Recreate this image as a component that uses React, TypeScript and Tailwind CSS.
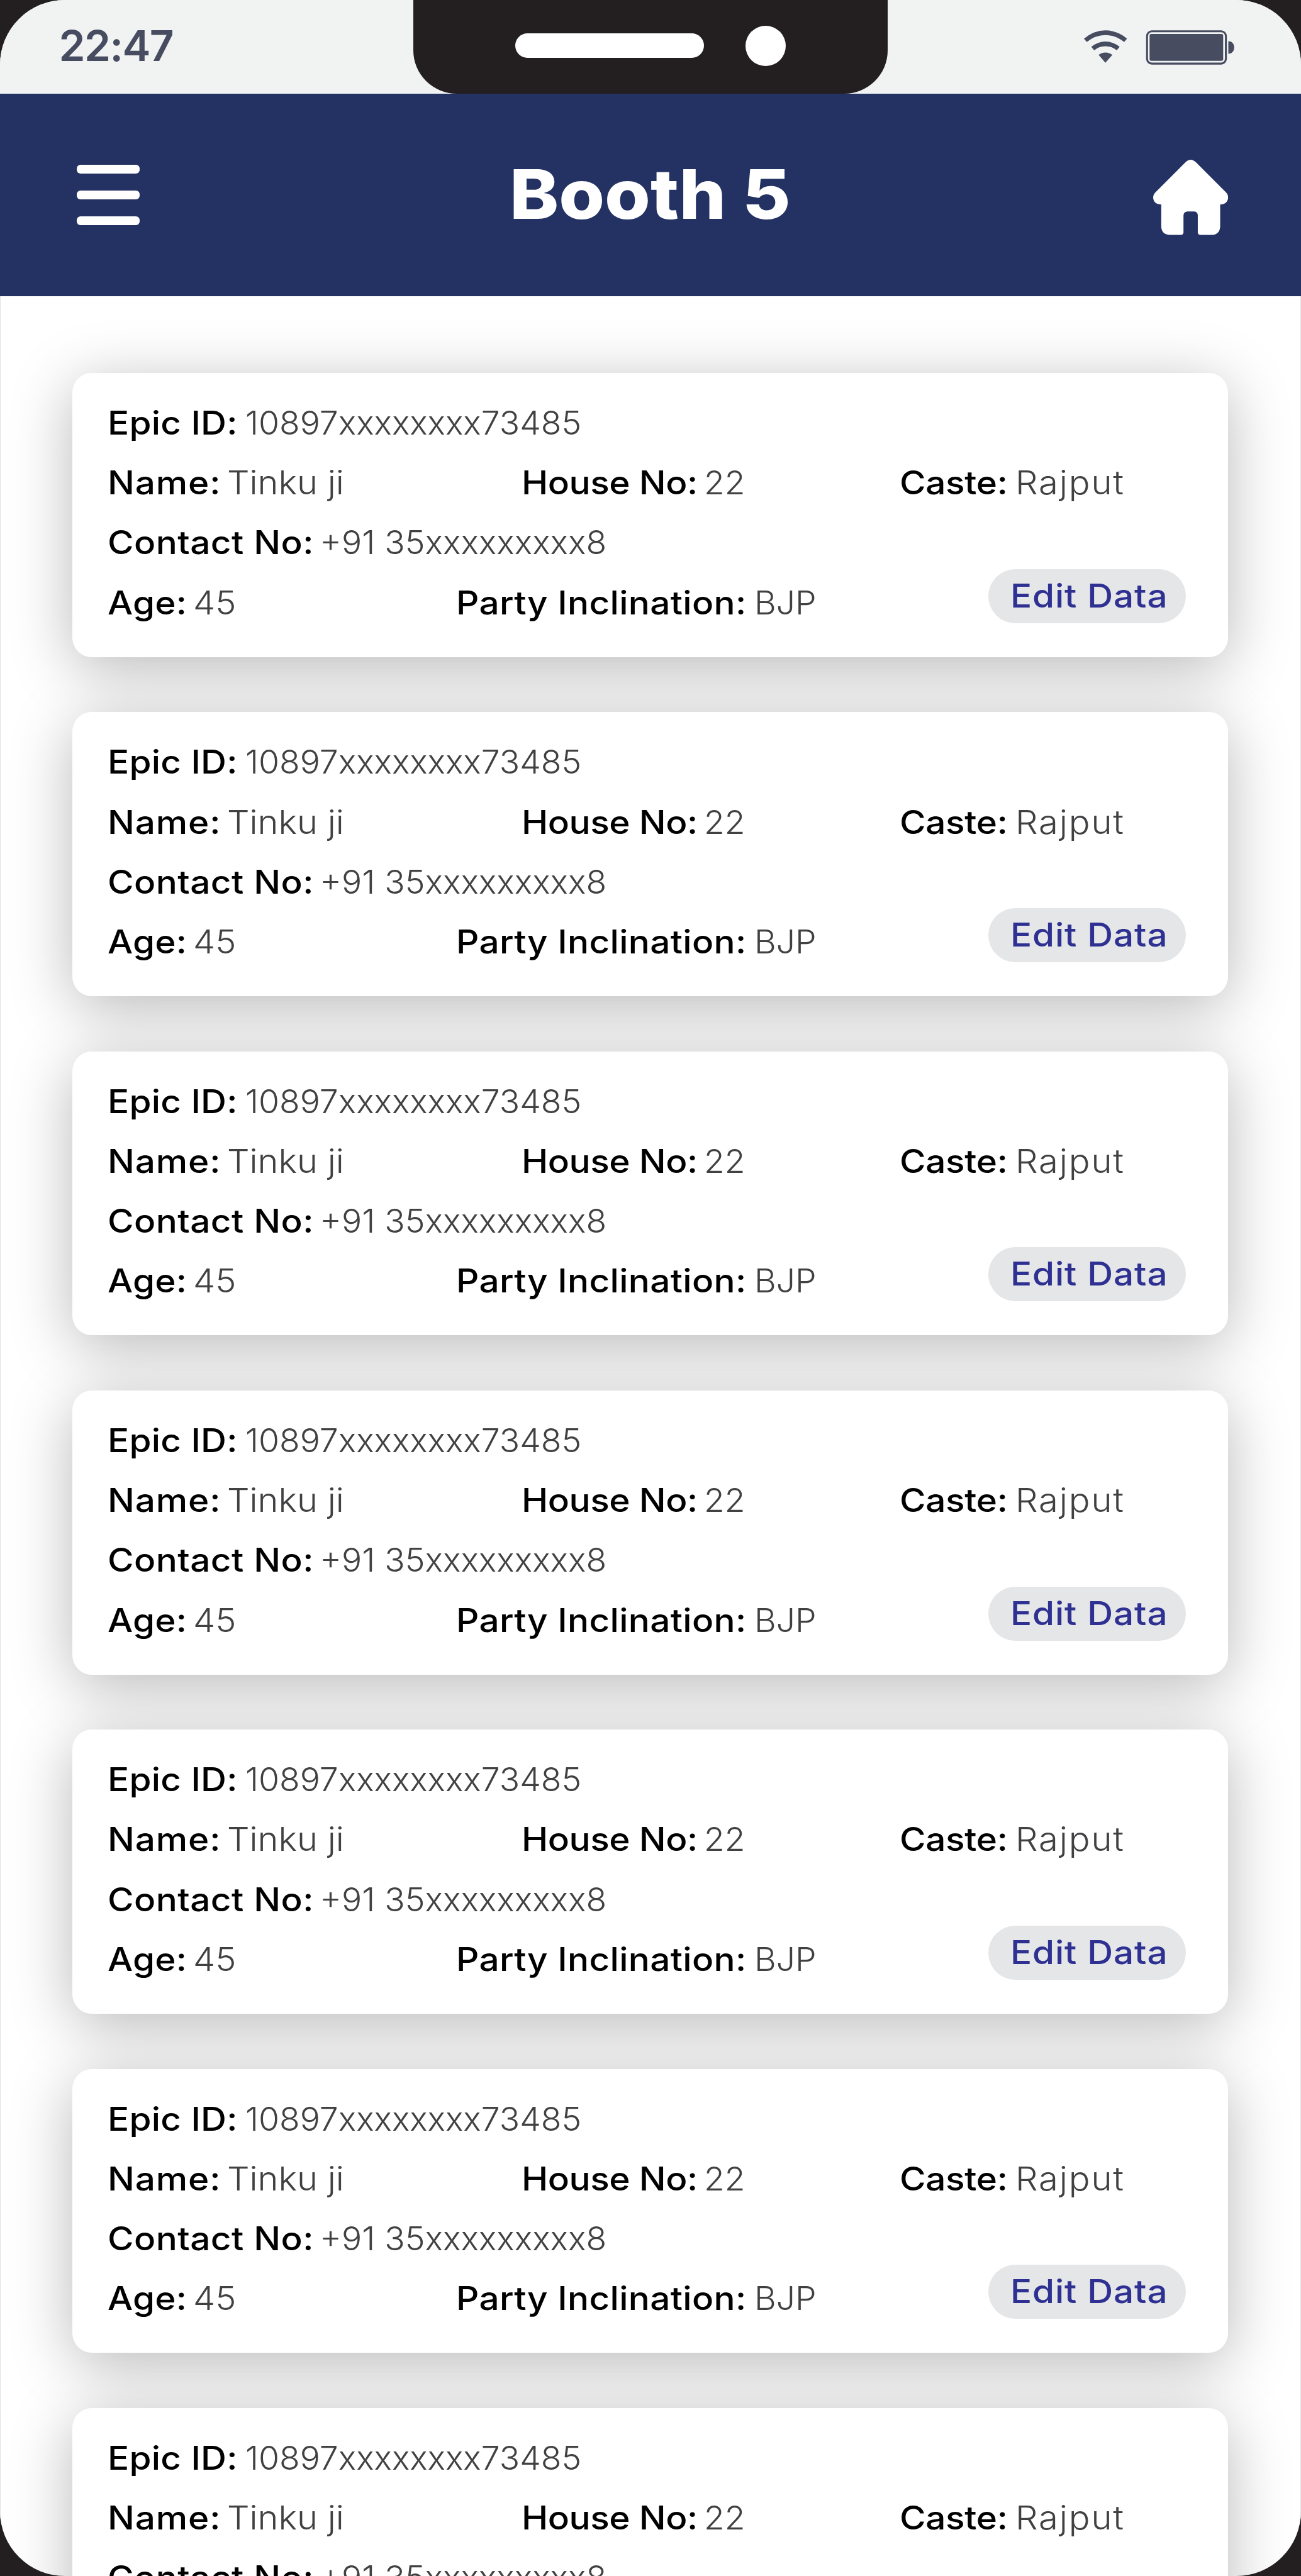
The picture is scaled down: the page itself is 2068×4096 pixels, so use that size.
import React from "react";

type CardData = {
  epicId: string;
  name: string;
  house: string;
  caste: string;
  contact: string;
  age: string;
  party: string;
};

const voter: CardData = {
  epicId: "10897xxxxxxxx73485",
  name: "Tinku ji",
  house: "22",
  caste: "Rajput",
  contact: "+91 35xxxxxxxxx8",
  age: "45",
  party: "BJP",
};

const voters: CardData[] = Array.from({ length: 7 }, () => voter);

function StatusIcons() {
  return (
    <svg
      className="ml-[309px] mt-[46px] h-[60px] w-[244px] shrink-0 self-start"
      viewBox="0 0 244 60"
      fill="#474c61"
    >
      <g transform="translate(-66.2 -46) scale(.2641 .2297)">
        <path d="M262 268Q322 210 391 210Q462 210 521 268L504 291Q452 243 391 243Q332 243 279 291Z" />
        <path d="M306 324Q346 287 391 287Q438 287 477 324L459 348Q430 320 391 320Q354 320 324 348Z" />
        <path d="M350 380Q368 363 391 363Q415 363 433 380L391 434Z" />
      </g>
      <rect x="103.3" y="3.8" width="125.3" height="51.3" rx="7.5" fill="none" stroke="#474c61" strokeWidth="3.1" />
      <rect x="107.3" y="8.1" width="117" height="42.7" rx="2.8" />
      <path d="M232.5 19.5C238.5 19.5 241.8 24 241.8 29.5C241.8 35 238.5 39.5 232.5 39.5Z" />
    </svg>
  );
}

function StatusBar() {
  return (
    <div className="flex h-[149px] items-center bg-[#f0f3f2] pl-[93.6px]">
      <div className="w-[563px] shrink-0 pb-[4px] text-[67.5px] font-semibold leading-none tracking-[-1.6px] text-[#474c61]">
        22:47
      </div>
      <div className="flex h-full w-[754.4px] shrink-0 items-center rounded-b-[69px] bg-[#231f20] pb-[3.7px] pl-[162.4px]">
        <div className="h-[39.6px] w-[299.6px] rounded-full bg-white" />
        <div className="ml-[66.6px] size-[64.2px] rounded-full bg-white" />
      </div>
      <StatusIcons />
    </div>
  );
}

function Header() {
  return (
    <header className="flex h-[321.6px] items-center bg-[#233263] pl-[122px] pr-[115.8px] text-white">
      <div className="flex w-[99.5px] flex-col gap-[26.8px]">
        <div className="h-[14.2px] rounded-[6px] bg-white" />
        <div className="h-[14.2px] rounded-[6px] bg-white" />
        <div className="h-[14.2px] rounded-[6px] bg-white" />
      </div>
      <h1 className="ml-[588.3px] origin-left scale-x-[1.08] whitespace-nowrap pb-[3px] text-[109px] font-extrabold leading-none">
        Booth 5
      </h1>
      <svg className="ml-auto mt-[8px] h-[119.6px] w-[119.4px] shrink-0" viewBox="119 87 520 521" fill="#fff">
        <path d="M345 102Q378 73 413 102L625 315Q639 330 638 352Q634 394 583 397L583 550Q580 604 527 608L446 608Q428 606 428 590L428 470Q426 445 400 445L358 445Q330 446 329 472L329 590Q328 606 312 608L230 608Q178 602 175 552L175 397Q122 396 119 350Q119 330 133 315Z" />
      </svg>
    </header>
  );
}

function Field({
  label,
  value,
  fieldClass,
  labelClass,
  labelTextClass,
  valueClass,
}: {
  label: string;
  value: string;
  fieldClass: string;
  labelClass: string;
  labelTextClass: string;
  valueClass: string;
}) {
  return (
    <div className={`flex shrink-0 whitespace-nowrap ${fieldClass}`}>
      <div className={`shrink-0 ${labelClass}`}>
        <span className={`inline-block origin-left scale-x-[1.09] font-medium text-black ${labelTextClass}`}>{label}</span>
      </div>
      <span className={`inline-block origin-left font-light text-[#414042] ${valueClass}`}>{value}</span>
    </div>
  );
}

function VoterCard({ v }: { v: CardData }) {
  return (
    <section className="h-[451.8px] w-[1837.3px] shrink-0 rounded-[31px] bg-white pl-[56.2px] pr-[67.5px] pt-[32px] text-[52px] leading-[95.2px] shadow-[0_18px_98px_rgba(0,0,0,0.28)]">
      <div className="flex h-[95.2px]">
        <Field label="Epic ID:" value={v.epicId} fieldClass="" labelClass="w-[218.6px]" labelTextClass="tracking-[0.2px]" valueClass="scale-x-[1.028]" />
      </div>
      <div className="flex h-[95.2px]">
        <Field label="Name:" value={v.name} fieldClass="w-[657.6px]" labelClass="w-[190px]" labelTextClass="tracking-[0.8px]" valueClass="scale-x-[1.075]" />
        <Field label="House No:" value={v.house} fieldClass="w-[600.6px]" labelClass="w-[289.7px]" labelTextClass="tracking-[-0.4px]" valueClass="scale-x-[1.028]" />
        <Field label="Caste:" value={v.caste} fieldClass="" labelClass="w-[184.1px]" labelTextClass="tracking-[-0.3px]" valueClass="scale-x-[1.08] tracking-[1.7px]" />
      </div>
      <div className="flex h-[95.2px]">
        <Field label="Contact No:" value={v.contact} fieldClass="" labelClass="w-[336.4px]" labelTextClass="tracking-[0.4px]" valueClass="scale-x-[1.03]" />
      </div>
      <div className="flex h-[95.2px] items-start">
        <Field label="Age:" value={v.age} fieldClass="w-[553.6px]" labelClass="w-[135.3px]" labelTextClass="tracking-[0.2px]" valueClass="scale-x-[1.075]" />
        <Field label="Party Inclination:" value={v.party} fieldClass="" labelClass="w-[474.4px]" labelTextClass="tracking-[0.3px]" valueClass="scale-x-[1.028]" />
        <button className="-mt-[6px] ml-auto h-[86px] w-[313.8px] shrink-0 whitespace-nowrap rounded-full bg-[#e5e6e8] pl-[35.2px] text-left font-medium leading-[86px] text-[#2e3192]">
          <span className="inline-block origin-left scale-x-[1.09] tracking-[0.8px]">Edit Data</span>
        </button>
      </div>
    </section>
  );
}

export default function App() {
  return (
    <div className="h-[4096px] w-[2068px] overflow-hidden bg-[#231f20] font-['Inter',sans-serif]">
      <div className="flex h-full w-full flex-col overflow-hidden rounded-[103px] bg-white">
        <StatusBar />
        <Header />
        <main className="flex min-h-0 flex-1 flex-col gap-[87.5px] overflow-hidden border-x border-[#e3e3e4] pl-[114.2px] pt-[122.5px]">
          {voters.map((v, i) => (
            <VoterCard key={i} v={v} />
          ))}
        </main>
      </div>
    </div>
  );
}
